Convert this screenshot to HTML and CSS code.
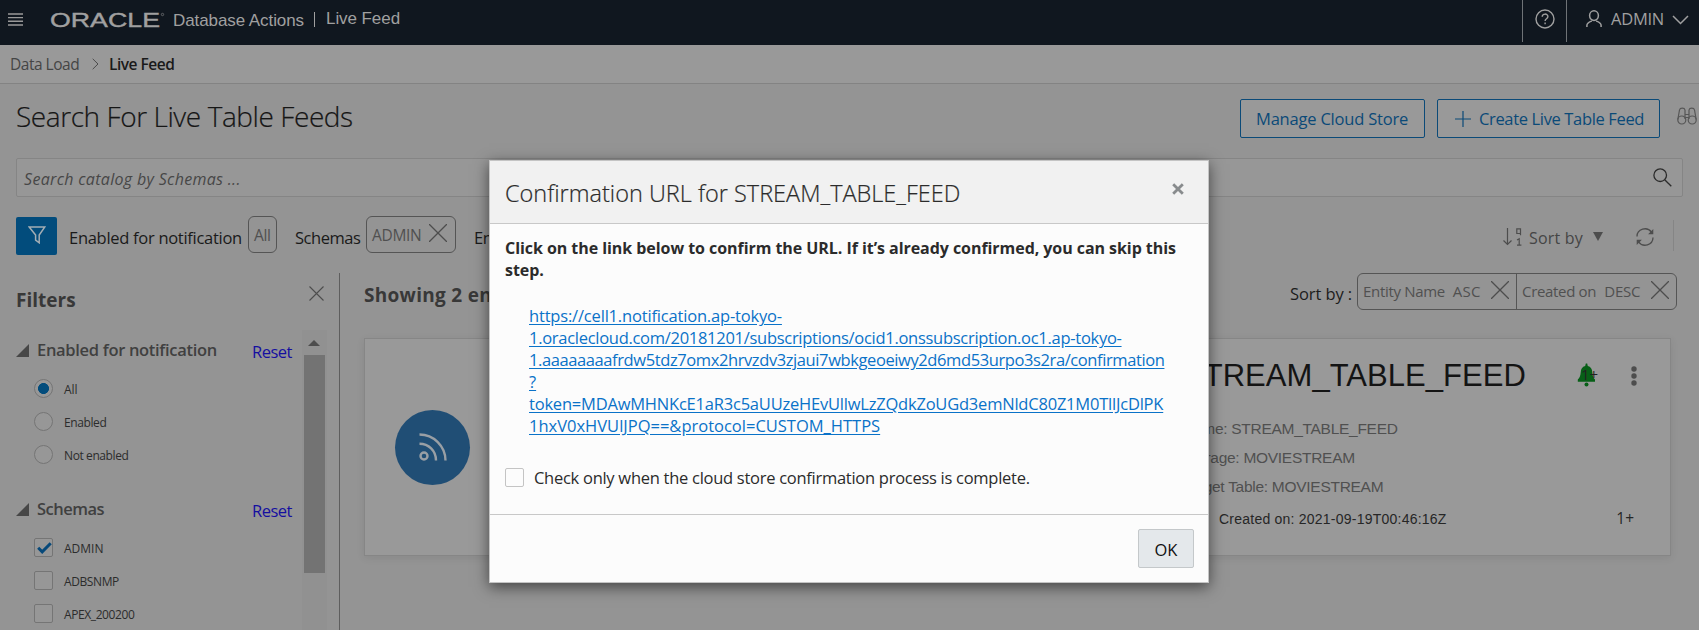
FILE: index.html
```html
<!DOCTYPE html>
<html lang="en">
<head>
<meta charset="utf-8">
<title>Database Actions | Live Feed</title>
<link rel="stylesheet" href="styles.css">
</head>
<body>
<header class="topbar">
  <svg class="burger" width="15" height="14" viewBox="0 0 15 14"><path d="M0 1h15M0 4.600h15M0 8.300h15M0 12h15" stroke="#999" stroke-width="1.4"/></svg>
  <svg class="logo" width="116" height="20" viewBox="0 0 116 20"><text x="0" y="17" textLength="110" lengthAdjust="spacingAndGlyphs">ORACLE</text><circle cx="112.5" cy="4.500" r="1.200" fill="none" stroke="#8b8b8b" stroke-width=".6"/></svg>
  <span class="product">Database Actions</span>
  <span class="bar"></span>
  <span class="where">Live Feed</span>
  <div class="help"><svg width="20" height="20" viewBox="0 0 20 20" fill="none" stroke="#a0a0a0" stroke-width="1.4"><circle cx="10" cy="10" r="9"/><path d="M7.200 7.800c0-3.600 5.700-3.600 5.700-.2 0 2.200-2.800 2-2.800 4.400M10.100 13.400v1.800"/></svg></div>
  <div class="account">
    <svg width="16" height="18" viewBox="0 0 16 18" fill="none" stroke="#a0a0a0" stroke-width="1.5"><ellipse cx="8" cy="5.600" rx="4.400" ry="4.800"/><path d="M.9 17v-1.600c0-2.600 3-3.600 5-4.400M15.100 17v-1.600c0-2.600-3-3.600-5-4.400"/></svg>
    <span class="user">ADMIN</span>
    <svg width="17" height="10" viewBox="0 0 17 10" fill="none" stroke="#a0a0a0" stroke-width="1.5"><path d="M1 1l7.500 7.500L16 1"/></svg>
  </div>
</header>
<nav class="crumbs">
  <span class="crumb">Data Load</span>
  <svg width="7" height="12" viewBox="0 0 7 12" fill="none" stroke="#4c4c4c"><path d="M.7.8L6 6 .7 11.200"/></svg>
  <span class="crumb-now">Live Feed</span>
</nav>
<section class="heading">
  <h1 class="title">Search For Live Table Feeds</h1>
  <button class="btn manage">Manage Cloud Store</button>
  <button class="btn create"><svg width="16" height="16" viewBox="0 0 16 16"><path d="M8 0v16M0 8h16" stroke="#0b4a78" stroke-width="1.200"/></svg><span>Create Live Table Feed</span></button>
  <svg class="binoc" width="20" height="18" viewBox="0 0 20 18" fill="none" stroke="#565656" stroke-width="1.200"><circle cx="4.800" cy="13" r="4"/><circle cx="15.200" cy="13" r="4"/><path d="M.8 12.500L2.500 3C3 .4 7.500.4 8 3v9M19.200 12.500L17.500 3C17 .4 12.500.4 12 3v9M8 7.500h4M8 10.500h4"/></svg>
</section>
<div class="search">
  <span class="ph">Search catalog by Schemas ...</span>
  <svg width="19" height="19" viewBox="0 0 19 19" fill="none" stroke="#2b2b2b" stroke-width="1.300"><circle cx="7.200" cy="7.200" r="6.300"/><path d="M11.700 11.700L18.300 18.300"/></svg>
</div>
<div class="toolbar">
  <div class="funnel"><svg width="18" height="18" viewBox="0 0 18 18" fill="none" stroke="#a3adb4" stroke-width="1.500"><path d="M1.200 1h15.600l-5.600 8v7.800l-3.600-2.600V9z"/></svg></div>
  <span class="tlabel l1">Enabled for notification</span>
  <span class="chip c1">All</span>
  <span class="tlabel l2">Schemas</span>
  <span class="chip c2"><span>ADMIN</span><svg class="x18" viewBox="0 0 18 18"><path d="M0 0l18 18M18 0L0 18"/></svg></span>
  <span class="tlabel l3">En</span>
  <div class="sorter">
    <svg width="19" height="18" viewBox="0 0 19 18" fill="none" stroke="#4d4d4d" stroke-width="1.200"><path d="M4.500 0v16.500M.5 12.500l4 4 4-4M17.500 5.500h-3.700V.8h3.700v6.400M14 12l2.200-1.200v6.400M14 17.200h4.400"/></svg>
    <span class="sortby">Sort by</span>
    <i class="caret"></i>
    <svg class="refresh" width="18" height="18" viewBox="0 0 18 18" fill="none" stroke="#4d4d4d" stroke-width="1.300"><path d="M1 8.500C1 1 11-2 15.500 4.200M17 9.500C17 17 7 20 2.500 13.800"/><path d="M17.300 1v5.200h-5.200zM.7 17v-5.200h5.200z" fill="#4d4d4d" stroke="none"/></svg>
  </div>
</div>
<main class="content">
  <aside class="side">
    <div class="side-head"><h2 class="filters">Filters</h2><svg class="x15" viewBox="0 0 15 15"><path d="M.5.5l14 14M14.500.5L.5 14.500"/></svg></div>
    <div class="side-body">
      <div class="groups">
        <div class="group"><i class="tri"></i><span class="gname">Enabled for notification</span><a class="reset">Reset</a></div>
        <div class="opt"><i class="radio on"></i><span class="plain">All</span></div>
        <div class="opt"><i class="radio"></i><span>Enabled</span></div>
        <div class="opt"><i class="radio"></i><span>Not enabled</span></div>
        <div class="group second"><i class="tri"></i><span class="gname narrow">Schemas</span><a class="reset">Reset</a></div>
        <div class="opt"><i class="check"><svg width="15" height="12" viewBox="0 0 15 12" fill="none" stroke="#07497a" stroke-width="3"><path d="M1.200 5.800l4 4L13.700 1.200"/></svg></i><span class="plain">ADMIN</span></div>
        <div class="opt"><i class="check"></i><span>ADBSNMP</span></div>
        <div class="opt"><i class="check"></i><span>APEX_200200</span></div>
      </div>
      <div class="track"><i class="up"></i><i class="thumb"></i></div>
    </div>
  </aside>
  <section class="results">
    <div class="res-head">
      <span class="showing">Showing 2 en</span>
      <span class="sl">Sort by :</span>
      <div class="sorts">
        <span class="sort"><span>Entity Name</span><span class="dir asc">ASC</span><svg class="x18" viewBox="0 0 18 18"><path d="M0 0l18 18M18 0L0 18"/></svg></span>
        <span class="sort"><span>Created on</span><span class="dir">DESC</span><svg class="x18" viewBox="0 0 18 18"><path d="M0 0l18 18M18 0L0 18"/></svg></span>
      </div>
    </div>
    <div class="cards">
      <article class="card">
        <div class="disc"><svg width="28" height="28" viewBox="0 0 28 28" fill="none" stroke="#999fa5" stroke-width="2.400"><circle cx="5" cy="23" r="3.500"/><path d="M.5 10.700c9 0 16.500 7 16.500 16.800M.5 1.500c14 0 26 11.500 26 26"/></svg></div>
      </article>
      <article class="card">
        <div class="info">
          <div class="name-row"><span class="fname">STREAM_TABLE_FEED</span>
            <span class="bell"><svg width="20" height="24" viewBox="0 0 20 24" fill="#075f17"><path d="M8.800.5h1.400l.6 2.500c3 .8 4.300 3 4.500 6.500.2 3.500 1 5.500 2.700 7v2.300H.8v-2.300c1.700-1.500 2.700-3.500 2.900-7C3.900 6 5.200 3.800 8.200 3z"/><circle cx="9.500" cy="21.500" r="2"/></svg><b>1+</b></span>
            <svg class="kebab" width="6" height="20" viewBox="0 0 6 20" fill="#4d4d4d"><circle cx="3" cy="3" r="2.700"/><circle cx="3" cy="10" r="2.700"/><circle cx="3" cy="17" r="2.700"/></svg>
          </div>
          <div class="meta">Name: STREAM_TABLE_FEED</div>
          <div class="meta">Storage: MOVIESTREAM</div>
          <div class="meta">Target Table: MOVIESTREAM</div>
          <div class="created"><span>Created on: 2021-09-19T00:46:16Z</span><span class="count">1+</span></div>
        </div>
      </article>
    </div>
  </section>
</main>
<div class="dialog" role="dialog">
  <div class="d-head"><span class="d-title">Confirmation URL for STREAM_TABLE_FEED</span><svg width="12" height="12" viewBox="0 0 12 12"><path d="M1.200 1.200l9.600 9.600M10.800 1.200L1.200 10.800" stroke="#888b8d" stroke-width="2.800"/></svg></div>
  <div class="d-body">
    <p class="lead">Click on the link below to confirm the URL. If it’s already confirmed, you can skip this<br>step.</p>
    <a class="url"><span class="u1">https://cell1.notification.ap-tokyo-</span><br><span class="u2">1.oraclecloud.com/20181201/subscriptions/ocid1.onssubscription.oc1.ap-tokyo-</span><br><span class="u3">1.aaaaaaaafrdw5tdz7omx2hrvzdv3zjaui7wbkgeoeiwy2d6md53urpo3s2ra/confirmation</span><br><span>?</span><br><span class="u4">token=MDAwMHNKcE1aR3c5aUUzeHEvUllwLzZQdkZoUGd3emNldC80Z1M0TllJcDlPK</span><br><span>1hxV0xHVUlJPQ==&amp;protocol=CUSTOM_HTTPS</span></a>
    <label class="confirm"><i class="box"></i><span>Check only when the cloud store confirmation process is complete.</span></label>
  </div>
  <div class="d-foot"><button class="ok">OK</button></div>
</div>
</body>
</html>
```
FILE: styles.css
```css
* { box-sizing: border-box; }
body { margin: 0; width: 1699px; height: 630px; overflow: hidden; background: #949494; font-family: "Open Sans", "Noto Sans", sans-serif; font-size: 16px; color: #1c1c1c; white-space: nowrap; position: relative; }
svg, i { display: block; flex: none; }
i { font-style: normal; }
button { font-family: inherit; padding: 0; margin: 0; }
h1, h2, p { margin: 0; }
.x18, .x15 { fill: none; stroke: #4d4d4d; stroke-width: 1.3; width: 18px; height: 18px; }
.x15 { width: 15px; height: 15px; stroke-width: 1.1; }

.topbar { height: 45px; background: #10171f; display: flex; align-items: flex-start; padding-left: 8px; color: #a0a0a0; }
.burger { margin-top: 13px; }
.logo { margin: 10px 0 0 27px; }
.logo text { font: 20px "Liberation Sans", sans-serif; fill: #a0a0a0; stroke: #a0a0a0; stroke-width: .4px; }
.product { font: 17px/20px "Liberation Sans", Arial, sans-serif; margin: 11px 0 0 7px; width: 131px; letter-spacing: -.08px; }
.bar { width: 1px; height: 15px; margin: 12px 0 0 10px; background: #a0a0a0; }
.where { font: 17px/20px "Liberation Sans", Arial, sans-serif; margin: 9px 0 0 11px; letter-spacing: -.07px; }
.help { margin-left: auto; width: 45px; height: 42px; border: solid #6f7377; border-width: 0 1px; padding: 9px 0 0 12px; }
.account { width: 132px; display: flex; padding: 10px 0 0 19px; }
.user { width: 54px; margin-left: 9px; line-height: 18px; font-size: 16.5px; letter-spacing: -.26px; }
.account svg:last-child { margin: 5px 0 0 7px; }

.crumbs { height: 39px; background: #999; border-bottom: 1px solid #838383; display: flex; align-items: center; padding-left: 10px; font-size: 15.5px; letter-spacing: -.49px; }
.crumb { width: 69px; color: #454545; }
.crumbs svg { margin: 0 10px 0 13px; }
.crumb-now { font-weight: 600; color: #1a1a1a; }

.heading { height: 74px; display: flex; align-items: flex-start; padding: 15px 2px 0 16px; }
.title { font-size: 28px; font-weight: 300; line-height: 36px; color: #161616; margin: -1px auto 0 0; letter-spacing: -.42px; -webkit-text-stroke: .2px #161616; }
.btn { height: 39px; background: #999; border: 1px solid #0b4a78; border-radius: 2px; color: #0b4a78; font-size: 16.5px; display: flex; align-items: center; }
.manage { width: 185px; padding-left: 15px; letter-spacing: -.2px; }
.create { width: 223px; margin: 0 17px 0 12px; padding-left: 17px; gap: 8px; letter-spacing: -.35px; }
.binoc { margin-top: 8px; }

.search { height: 39px; margin: 0 16px 1px; border: 1px solid #858585; background: #979797; border-radius: 2px; display: flex; align-items: center; padding: 0 10px 0 7px; justify-content: space-between; }
.ph { font-style: italic; font-size: 16px; color: #474747; letter-spacing: .32px; padding-top: 2px; }
.search svg { margin-bottom: 1px; }

.toolbar { height: 75px; display: flex; align-items: flex-start; padding: 20px 25px 0 16px; }
.funnel { width: 41px; height: 38px; margin-top: -1px; background: #024c7c; border-radius: 2px; padding: 9px 0 0 12px; }
.tlabel { font-size: 16.5px; line-height: 24px; margin-top: 8px; color: #1a1a1a; }
.l1 { width: 179px; margin-left: 12px; letter-spacing: -.29px; }
.chip { height: 37px; margin-top: -2px; border: 1px solid #555; border-radius: 6px; display: flex; align-items: center; color: #505050; font-size: 15.5px; padding-left: 5px; letter-spacing: -.3px; }
.c1 { width: 29px; }
.l2 { width: 71px; margin-left: 18px; letter-spacing: -.45px; }
.c2 { width: 90px; }
.c2 svg { margin: -3px 8px 0 auto; }
.l3 { margin-left: 18px; letter-spacing: -.4px; }
.sorter { margin-left: auto; display: flex; align-items: center; height: 31px; margin-top: 2px; border-right: 1px solid #858585; padding: 5px 20px 0 0; }
.sorter svg { margin-top: -3px; }
.sortby { width: 55px; color: #454545; margin-left: 7px; font-size: 16px; letter-spacing: .2px; }
.caret { border: 5.5px solid transparent; border-top: 9px solid #4d4d4d; border-bottom: 0; margin: -3px 32px 0 9px; }
.refresh { position: relative; left: 1px; }

.content { display: flex; height: 358px; }
.side { width: 340px; border-right: 1px solid #5e5e5e; padding-left: 16px; }
.side-head { height: 57px; display: flex; justify-content: space-between; padding-right: 15px; }
.filters { font-size: 19px; font-weight: 700; color: #383838; line-height: 24px; margin-top: 15px; }
.side-head svg { margin-top: 13px; }
.side-body { display: flex; justify-content: space-between; height: 301px; }
.groups { width: 280px; padding-top: 8px; }
.group { display: flex; height: 34px; }
.second { margin-top: 26px; }
.tri { width: 13px; height: 13px; margin-top: 6px; background: #474747; clip-path: polygon(100% 0, 100% 100%, 0 100%); }
.gname { font-weight: 600; font-size: 16.5px; color: #404040; line-height: 24px; margin-left: 8px; letter-spacing: -.31px; }
.narrow { letter-spacing: -.5px; }
.reset { margin-left: auto; margin-right: 4px; color: #150fa0; font-size: 16.5px; line-height: 24px; margin-top: 2px; letter-spacing: -.49px; }
.opt { height: 33px; display: flex; align-items: center; padding: 0 0 0 18px; gap: 11px; font-size: 12px; color: #2c2c2c; letter-spacing: -.4px; }
.opt span { margin-top: 2px; }
.plain { letter-spacing: 0; }
.radio { width: 19px; height: 19px; border: 1px solid #757575; border-radius: 50%; background: #979797; }
.on { background: radial-gradient(circle, #024c7c 5.2px, #979797 5.8px); }
.check, .box { width: 19px; height: 19px; border: 1px solid #757575; border-radius: 2px; background: #979797; padding: 3px 0 0 2px; }
.track { width: 25px; margin-right: 12px; background: #919191; padding: 10px 0 0 2px; }
.up { width: 0; height: 6px; border: 6px solid transparent; border-bottom: 6px solid #4d4d4d; border-top: 0; margin-left: 4px; }
.thumb { width: 21px; height: 218px; background: #737373; margin-top: 9px; }

.results { flex: 1; padding-left: 24px; }
.res-head { height: 65px; display: flex; align-items: flex-start; padding-right: 22px; }
.showing { font-weight: 700; font-size: 19px; line-height: 24px; color: #383838; margin: 10px auto 0 0; letter-spacing: .3px; }
.sl { font-size: 16.5px; width: 67px; line-height: 24px; margin-top: 9px; letter-spacing: -.1px; }
.sorts { display: flex; width: 320px; height: 37px; border: 1px solid #555; border-radius: 6px; }
.sort { width: 158px; display: flex; align-items: center; padding: 0 7px 2px 5px; font-size: 15px; color: #505050; letter-spacing: -.32px; }
.sort + .sort { border-left: 1px solid #555; flex: 1; padding-left: 5px; }
.dir { margin-left: 8px; letter-spacing: -.2px; }
.asc { letter-spacing: .2px; }
.sort svg { margin: -2px 0 0 auto; }
.cards { display: grid; grid-template-columns: 646px 647px; gap: 14px; }
.card { height: 218px; background: #999; border: 1px solid #868686; box-shadow: 0 2px 8px rgba(0, 0, 0, .08); }
.disc { width: 75px; height: 75px; border-radius: 50%; background: #204e75; margin: 71px 0 0 30px; padding: 23px 0 0 24px; }
.info { padding: 16px 33px 0 158px; font-family: "Liberation Sans", Arial, sans-serif; }
.name-row { display: flex; height: 59px; align-items: flex-start; }
.fname { font-size: 31px; line-height: 42px; color: #141414; width: 344px; letter-spacing: .04px; }
.bell { position: relative; margin: 8px 0 0 auto; }
.bell b { position: absolute; left: 4px; top: 1px; font: 15px/20px "Open Sans", sans-serif; color: #222; }
.kebab { margin: 11px 0 0 34px; }
.meta { font-size: 15.5px; line-height: 29px; color: #505050; letter-spacing: -.28px; }
.created { display: flex; justify-content: space-between; font-size: 14px; line-height: 24px; padding-left: 36px; color: #262626; margin-top: 6px; letter-spacing: .23px; }
.count { font-family: "Open Sans", sans-serif; font-size: 15.5px; margin: -1px 3px 0 0; letter-spacing: 0; }

.dialog { position: absolute; left: 489px; top: 160px; width: 720px; height: 423px; background: #fcfcfc; border: 1px solid #c4c4c4; box-shadow: 0 4px 14px rgba(0, 0, 0, .55); color: #2b2b2b; }
.d-head { height: 63px; background: #f1f1f1; border-bottom: 1px solid #c8c8c8; display: flex; justify-content: space-between; padding: 15px 24px 0 15px; }
.d-title { font-size: 23.5px; font-weight: 300; line-height: 34px; -webkit-text-stroke: .2px #2b2b2b; }
.d-head svg { margin-top: 7px; }
.d-body { height: 291px; border-bottom: 1px solid #c8c8c8; padding: 13px 15px 0; }
.lead { font-weight: 700; font-size: 16px; line-height: 22px; letter-spacing: -.055px; }
.url { display: block; color: #0a72c8; font-size: 16.5px; line-height: 22px; margin: 24px 0 0 24px; text-decoration: underline; text-underline-offset: 2px; }
.u1 { letter-spacing: -.18px; }
.u2 { letter-spacing: -.285px; }
.u3 { letter-spacing: -.4px; }
.u4 { letter-spacing: -.21px; }
.confirm { display: flex; align-items: center; margin-top: 29px; gap: 10px; font-size: 16.5px; line-height: 24px; letter-spacing: -.275px; }
.box { background: #fcfcfc; border-color: #c4c4c4; margin-bottom: 1px; }
.d-foot { display: flex; justify-content: flex-end; padding: 14px 14px 0; }
.ok { width: 56px; height: 39px; background: #e4e8eb; border: 1px solid #c4c8ca; border-radius: 2px; font-size: 16.5px; color: #111; padding-top: 2px; }
```
